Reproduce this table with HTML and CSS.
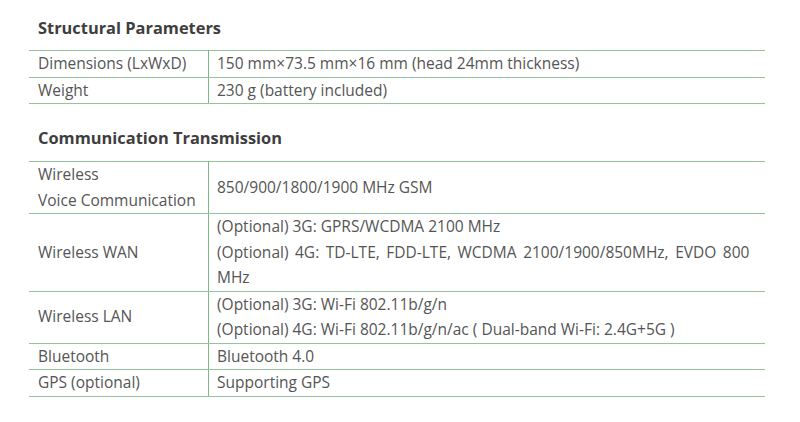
FILE: index.html
```html
<!DOCTYPE html>
<html>
<head>
<meta charset="utf-8">
<link rel="stylesheet" href="styles.css">
</head>
<body>
<div class="page">
  <h2 class="title first">Structural Parameters</h2>
  <table class="spec">
    <tr><td class="k">Dimensions (LxWxD)</td><td class="v">150 mm×73.5 mm×16 mm (head 24mm thickness)</td></tr>
    <tr><td class="k">Weight</td><td class="v">230 g (battery included)</td></tr>
  </table>
  <h2 class="title second">Communication Transmission</h2>
  <table class="spec">
    <tr><td class="k">Wireless<br>Voice Communication</td><td class="v">850/900/1800/1900 MHz GSM</td></tr>
    <tr><td class="k">Wireless WAN</td><td class="v">(Optional) 3G: GPRS/WCDMA 2100 MHz<br><span class="just">(Optional) 4G: TD-LTE, FDD-LTE, WCDMA 2100/1900/850MHz, EVDO 800</span><br>MHz</td></tr>
    <tr><td class="k">Wireless LAN</td><td class="v">(Optional) 3G: Wi-Fi 802.11b/g/n<br>(Optional) 4G: Wi-Fi 802.11b/g/n/ac ( Dual-band Wi-Fi: 2.4G+5G )</td></tr>
    <tr><td class="k">Bluetooth</td><td class="v">Bluetooth 4.0</td></tr>
    <tr><td class="k">GPS (optional)</td><td class="v">Supporting GPS</td></tr>
  </table>
</div>
</body>
</html>
```

FILE: styles.css
```css
html, body {
  margin: 0;
  padding: 0;
  background: #ffffff;
}
.page {
  padding: 16px 0 0 29px;
  width: 736px;
  font-family: "Open Sans", "Noto Sans", sans-serif;
  color: #555555;
}
.title {
  margin: 0;
  padding-left: 9px;
  font-size: 16.4px;
  line-height: 24px;
  font-weight: 700;
  color: #3e3e3e;
}
.title.first { margin-bottom: 10px; }
.title.second { margin-top: 22px; margin-bottom: 11px; }
.spec {
  width: 736px;
  border-collapse: collapse;
  font-size: 15.5px;
  line-height: 25.5px;
}
.spec td {
  border-top: 1px solid #93c49e;
  border-bottom: 1px solid #93c49e;
  padding: 0 4px 0 9px;
  vertical-align: middle;
  white-space: nowrap;
}
.spec .k {
  width: 166px;
  border-right: 1px solid #7cb889;
}
.spec .v {
  padding-left: 8px;
}
.just {
  word-spacing: 2.5px;
}
```
